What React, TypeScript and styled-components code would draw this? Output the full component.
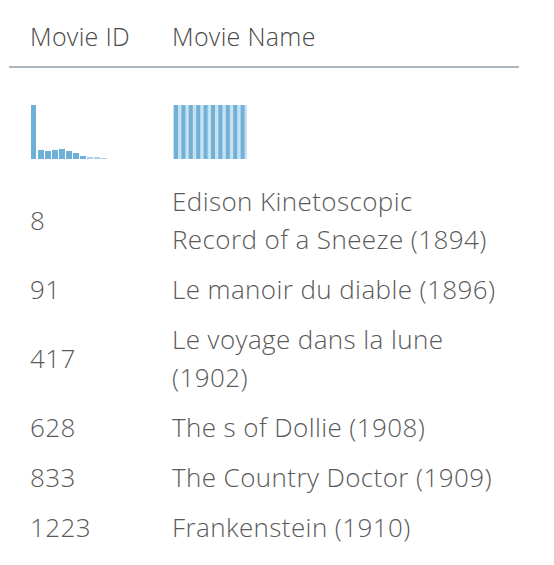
import React from 'react';
import styled, { createGlobalStyle } from 'styled-components';

const GlobalStyle = createGlobalStyle`
  body {
    margin: 0;
    background: #ffffff;
    font-family: "Open Sans", "Liberation Sans", sans-serif;
  }
`;

const Container = styled.div`
  padding: 17px 0 0 9px;
  width: 510px;
`;

const Grid = styled.div`
  display: grid;
  grid-template-columns: 142px 1fr;
  color: #5a5a5a;
  font-weight: 300;
  font-size: 26px;
  line-height: 38px;
  letter-spacing: 0.4px;
`;

const HeaderCell = styled.div`
  padding: 0 0 11px 21px;
  border-bottom: 2px solid #a9b6bd;
  color: #4a4a4a;
  font-size: 25px;
  letter-spacing: 0.3px;
`;

const ChartCell = styled.div`
  padding: 36px 0 16px 21px;
  display: flex;
  align-items: flex-end;
`;

const Cell = styled.div`
  padding: 6px 18px 6px 21px;
  display: flex;
  align-items: center;
`;

const movies = [
  { id: 8, name: 'Edison Kinetoscopic Record of a Sneeze (1894)' },
  { id: 91, name: 'Le manoir du diable (1896)' },
  { id: 417, name: 'Le voyage dans la lune (1902)' },
  { id: 628, name: 'The s of Dollie (1908)' },
  { id: 833, name: 'The Country Doctor (1909)' },
  { id: 1223, name: 'Frankenstein (1910)' },
];

const idBars = [54, 9, 8, 9, 10, 8, 6, 3, 2, 2, 1];

const IdHistogram = () => (
  <svg width="82" height="56" viewBox="0 0 82 56">
    {idBars.map((h, i) => (
      <rect key={i} x={1 + i * 7} y={55 - h} width={i === 0 ? 5 : 6} height={h} fill="#6fb0d9" opacity={i > 7 ? 0.6 : 1} />
    ))}
  </svg>
);

const NameHistogram = () => (
  <svg width="76" height="56" viewBox="0 0 76 56">
    <rect x="1" y="1" width="74" height="54" fill="#c3e3f3" />
    {Array.from({ length: 10 }).map((_, i) => (
      <rect key={i} x={2 + i * 7.4} y="1" width="4" height="54" fill="#74afd6" />
    ))}
  </svg>
);

const App: React.FC = () => {
  return (
    <Container>
      <GlobalStyle />
      <Grid>
        <HeaderCell>Movie ID</HeaderCell>
        <HeaderCell>Movie Name</HeaderCell>
        <ChartCell>
          <IdHistogram />
        </ChartCell>
        <ChartCell>
          <NameHistogram />
        </ChartCell>
        {movies.map((m) => (
          <React.Fragment key={m.id}>
            <Cell>{m.id}</Cell>
            <Cell>{m.name}</Cell>
          </React.Fragment>
        ))}
      </Grid>
    </Container>
  );
};

export default App;
